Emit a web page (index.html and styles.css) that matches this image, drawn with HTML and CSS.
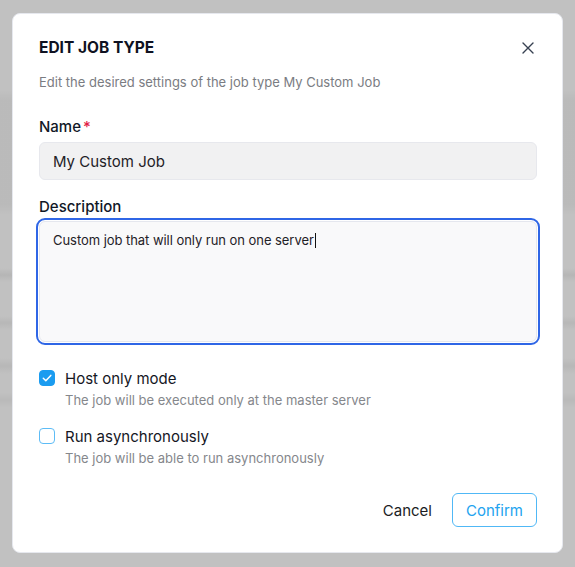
FILE: index.html
```html
<!DOCTYPE html>
<html lang="en">
<head>
<meta charset="utf-8">
<title>Edit Job Type</title>
<link rel="stylesheet" href="styles.css">
</head>
<body>
<div class="modal">
  <div class="header">
    <h1 class="title">EDIT JOB TYPE</h1>
    <button class="close" aria-label="Close">
      <svg width="12" height="12" viewBox="0 0 12 12"><path d="M1 1L11 11M11 1L1 11" stroke="#374151" stroke-width="1.4" stroke-linecap="round"/></svg>
    </button>
  </div>
  <p class="subtitle">Edit the desired settings of the job type My Custom Job</p>

  <label class="label label-name">Name<span class="req">*</span></label>
  <div class="input">My Custom Job</div>

  <label class="label label-desc">Description</label>
  <div class="textarea">Custom job that will only run on one server<span class="caret"></span></div>

  <div class="check-row row1">
    <span class="box checked">
      <svg width="12" height="12" viewBox="0 0 12 12"><path d="M2.3 6.3L4.8 8.7L9.8 3.4" fill="none" stroke="#fff" stroke-width="1.5" stroke-linecap="round" stroke-linejoin="round"/></svg>
    </span>
    <span class="check-label">Host only mode</span>
  </div>
  <p class="hint">The job will be executed only at the master server</p>

  <div class="check-row row2">
    <span class="box"></span>
    <span class="check-label">Run asynchronously</span>
  </div>
  <p class="hint">The job will be able to run asynchronously</p>

  <div class="footer">
    <button class="btn-cancel">Cancel</button>
    <button class="btn-confirm">Confirm</button>
  </div>
</div>
</body>
</html>
```

FILE: styles.css
```css
* { box-sizing: border-box; }
html, body { margin: 0; padding: 0; }
body {
  width: 575px;
  height: 567px;
  overflow: hidden;
  font-family: Inter, "Noto Sans", sans-serif;
  background-color: #c1c1c1;
  background-image:
    linear-gradient(180deg, transparent 90px, rgba(0,0,0,0.035) 100px, rgba(0,0,0,0.035) 205px, transparent 215px,
      transparent 268px, rgba(0,0,0,0.06) 275px, transparent 282px,
      transparent 316px, rgba(0,0,0,0.05) 323px, transparent 330px,
      transparent 358px, rgba(0,0,0,0.05) 366px, transparent 374px,
      transparent 392px, rgba(0,0,0,0.04) 400px, transparent 408px);
  padding: 13px 12px 0 12px;
}
.modal {
  width: 551px;
  height: 540px;
  background: #fff;
  border-radius: 8px;
  border: 1px solid #e6e8ee;
  padding: 24px 25px 0 26px;
  display: flex;
  flex-direction: column;
}
.header {
  display: flex;
  align-items: center;
  justify-content: space-between;
  height: 20px;
}
.title {
  margin: 0;
  font-size: 15.5px;
  line-height: 20px;
  font-weight: 700;
  color: #0f1222;
}
.close {
  border: 0;
  background: none;
  padding: 0;
  width: 12px;
  height: 12px;
  margin-right: 3px;
  display: flex;
}
.subtitle {
  margin: 15px 0 0 0;
  font-size: 13px;
  line-height: 18px;
  color: #7a7c82;
}
.label {
  display: block;
  font-size: 15px;
  line-height: 20px;
  color: #111827;
  font-weight: 500;
}
.label-name { margin-top: 26px; }
.label-desc { margin-top: 17px; }
.req { color: #e11d48; margin-left: 2px; }
.input {
  margin-top: 5px;
  height: 38px;
  background: #f1f1f2;
  border: 1px solid #e7e8ed;
  border-radius: 6px;
  padding: 0 13px;
  display: flex;
  align-items: center;
  font-size: 15px;
  color: #1f2127;
}
.textarea {
  margin-top: 4px;
  height: 121px;
  background: #f9f9fa;
  border: 1px solid #e5e7ee;
  border-radius: 6px;
  outline: 2px solid #2f66e6;
  outline-offset: 1px;
  padding: 9px 13px;
  font-size: 13px;
  line-height: 18px;
  letter-spacing: -0.05px;
  color: #1f2127;
}
.caret {
  display: inline-block;
  width: 1px;
  height: 15px;
  background: #111;
  vertical-align: -3px;
  margin-left: 1px;
}
.check-row {
  display: flex;
  align-items: center;
  gap: 10px;
  height: 20px;
}
.row1 { margin-top: 26px; }
.row2 { margin-top: 17px; }
.box {
  width: 16px;
  height: 16px;
  border-radius: 4px;
  border: 1.5px solid #5dbcf6;
  background: #fff;
  display: flex;
  align-items: center;
  justify-content: center;
}
.box.checked {
  background: #1b9cf0;
  border-color: #1b9cf0;
}
.check-label {
  font-size: 15px;
  color: #15171f;
}
.hint {
  margin: 3px 0 0 26px;
  font-size: 13px;
  line-height: 18px;
  color: #85878c;
}
.footer {
  margin-top: 26px;
  display: flex;
  justify-content: flex-end;
  align-items: center;
  gap: 20px;
}
.btn-cancel {
  border: 0;
  background: none;
  padding: 0;
  font-family: inherit;
  font-size: 15px;
  color: #1b1d24;
}
.btn-confirm {
  width: 85px;
  height: 34px;
  border: 1px solid #50b8f6;
  border-radius: 6px;
  background: #fff;
  font-family: inherit;
  font-size: 15px;
  color: #22a3ef;
  margin-right: 0;
}
```
